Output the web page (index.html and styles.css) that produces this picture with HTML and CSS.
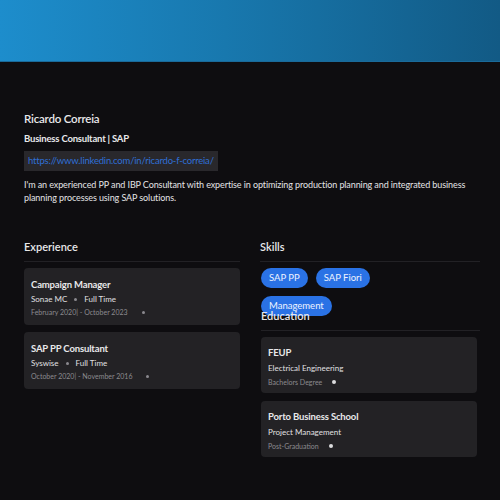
FILE: index.html
```html
<!DOCTYPE html>
<html lang="en">
<head>
    <meta charset="UTF-8">
    <meta name="viewport" content="width=device-width, initial-scale=1.0">
    <title>Ricardo Correia</title>
    <link rel="stylesheet" href="styles.css">
</head>
<body>
    <header class="banner"></header>

    <main class="profile">
        <section class="intro">
            <h1>Ricardo Correia</h1>
            <h2>Business Consultant | SAP</h2>
            <div class="link-box">
                <a href="https://www.linkedin.com/in/ricardo-f-correia/">https://www.linkedin.com/in/ricardo-f-correia/</a>
            </div>
            <p class="about">I'm an experienced PP and IBP Consultant with expertise in optimizing production planning and integrated business planning processes using SAP solutions.</p>
        </section>

        <div class="columns">
            <section class="column">
                <h3 class="section-title">Experience</h3>
                <div class="cards">
                    <div class="card">
                        <div class="card-title">Campaign Manager</div>
                        <div class="card-sub">Sonae MC <span class="dot"></span> Full Time</div>
                        <div class="card-meta">February 2020| - October 2023 <span class="dot"></span></div>
                    </div>
                    <div class="card">
                        <div class="card-title">SAP PP Consultant</div>
                        <div class="card-sub">Syswise <span class="dot"></span> Full Time</div>
                        <div class="card-meta">October 2020| - November 2016 <span class="dot"></span></div>
                    </div>
                </div>
            </section>

            <section class="column right">
                <h3 class="section-title">Skills</h3>
                <div class="pills">
                    <span class="pill">SAP PP</span>
                    <span class="pill">SAP Fiori</span>
                    <span class="pill">Management</span>
                </div>

                <h3 class="section-title edu">Education</h3>
                <div class="cards edu-cards">
                    <div class="card">
                        <div class="card-title">FEUP</div>
                        <div class="card-sub">Electrical Engineering</div>
                        <div class="card-meta">Bachelors Degree <span class="dot light"></span></div>
                    </div>
                    <div class="card">
                        <div class="card-title">Porto Business School</div>
                        <div class="card-sub">Project Management</div>
                        <div class="card-meta">Post-Graduation <span class="dot light"></span></div>
                    </div>
                </div>
            </section>
        </div>
    </main>
</body>
</html>
```

FILE: styles.css
```css
* {
    margin: 0;
    padding: 0;
    box-sizing: border-box;
}

body {
    font-family: 'Lato', 'Noto Sans', sans-serif;
    background: #0e0d10;
    color: #e8e8ea;
    width: 500px;
    min-height: 500px;
}

.banner {
    height: 62px;
    background: linear-gradient(90deg, #1d8dcc 0%, #1878ae 45%, #125a85 100%);
    border-bottom: 1px solid #1a6a9a;
}

.profile {
    padding: 49px 20px 0 24px;
}

h1 {
    font-size: 11.5px;
    font-weight: 600;
    letter-spacing: -0.2px;
    line-height: 16px;
    margin-bottom: 5px;
}

h2 {
    font-size: 9.5px;
    font-weight: 700;
    letter-spacing: -0.2px;
    line-height: 13px;
    margin-bottom: 6px;
}

.link-box {
    width: 194px;
    height: 20px;
    background: #29282c;
    padding: 0 4px;
    font-size: 9.5px;
    line-height: 20px;
    letter-spacing: -0.2px;
    margin-bottom: 7px;
}

.link-box a {
    color: #2f6fd6;
    text-decoration: none;
}

.about {
    font-size: 9px;
    letter-spacing: -0.1px;
    line-height: 13px;
    color: #e4e4e6;
}

.columns {
    display: flex;
    gap: 20px;
    margin-top: 36px;
}

.column {
    width: 216px;
}

.column.right {
    width: 220px;
}

.section-title {
    font-size: 11px;
    font-weight: 600;
    line-height: 14px;
    padding-bottom: 7px;
    border-bottom: 1px solid #222125;
    margin-bottom: 6px;
}

.cards {
    display: flex;
    flex-direction: column;
    gap: 7px;
}

.card {
    background: #232225;
    border-radius: 4px;
    padding: 11px 7px 0;
    height: 57px;
}

.card-title {
    font-size: 9.5px;
    font-weight: 700;
    letter-spacing: -0.15px;
    line-height: 11px;
    margin-bottom: 3px;
}

.card-sub {
    font-size: 8px;
    line-height: 12px;
    color: #e0e0e2;
    display: flex;
    align-items: center;
    gap: 7px;
}

.card-meta {
    font-size: 7px;
    line-height: 12px;
    margin-top: 1px;
    color: #8c8b8f;
    display: flex;
    align-items: center;
    gap: 14px;
}

.dot {
    width: 3px;
    height: 3px;
    border-radius: 50%;
    background: #8a898e;
    display: inline-block;
}

.dot.light {
    width: 4px;
    height: 4px;
    background: #dcdcde;
}

.pills {
    display: flex;
    flex-wrap: wrap;
    gap: 8px;
    width: 150px;
    height: 41px;
    padding-left: 1px;
}

.pill {
    background: #2a72e5;
    color: #eef3ff;
    font-size: 9.5px;
    line-height: 20px;
    height: 20px;
    padding: 0 8px;
    border-radius: 10px;
}

/* heading sits above the wrapped pills */
.section-title.edu {
    position: relative;
    margin-left: 1px;
}

.edu-cards {
    padding: 0 3px 0 1px;
    gap: 8px;
}

.edu-cards .card {
    height: 56px;
    padding: 10px 7px 0;
}

.edu-cards .card-title {
    margin-bottom: 4px;
}

.edu-cards .card-sub {
    margin-bottom: 2px;
}

.edu-cards .card-meta {
    gap: 10px;
}
```
